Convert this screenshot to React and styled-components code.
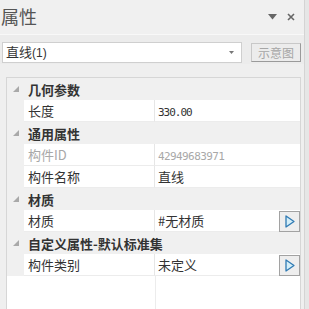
import React from "react";
import styled, { createGlobalStyle } from "styled-components";

const Global = createGlobalStyle`
  html, body { margin: 0; padding: 0; }
  body {
    width: 309px; height: 309px; overflow: hidden;
    background: #f0f0f0;
    font-family: "Noto Sans CJK SC", "Noto Sans", sans-serif;
  }
`;

const Frame = styled.div`
  display: flex;
  width: 309px;
  height: 309px;
`;

const Main = styled.div`
  width: 305px;
  display: flex;
  flex-direction: column;
  background: #efefef;
`;

const EdgeBar = styled.div`
  width: 4px;
  border-left: 1px solid #d4d4d4;
  background: #e6e6e6;
`;

const Header = styled.div`
  height: 34px;
  display: flex;
  align-items: center;
  justify-content: space-between;
  padding-left: 1px;
  padding-right: 9px;
  border-bottom: 1px solid #f8f8f8;
  background: #f0f0f0;
`;

const Title = styled.div`
  font-size: 18px;
  color: #555;
  line-height: 20px;
  margin-top: -2px;
`;

const DockIcons = styled.div`
  display: flex;
  align-items: center;
  gap: 10px;
`;

const Toolbar = styled.div`
  display: flex;
  align-items: center;
  padding: 6px 0 0 2px;
  gap: 9px;
  background: #ececec;
  height: 23px;
`;

const Combo = styled.div`
  height: 19px;
  width: 228px;
  background: #fff;
  border: 1px solid #cfcfcf;
  display: flex;
  align-items: center;
  justify-content: space-between;
  padding: 0 7px 0 3px;
  box-sizing: content-box;
  font-size: 13px;
  color: #333;
`;

const ComboText = styled.span`
  line-height: 19px;
  color: #333;
`;

const Paren = styled.span`
  font-family: "Liberation Sans", sans-serif;
  font-size: 12px;
`;

const HintButton = styled.div`
  width: 48px;
  height: 17px;
  border: 1px solid #9a9a9a;
  border-top-color: #c8c8c8;
  border-left-color: #c8c8c8;
  display: flex;
  align-items: center;
  justify-content: center;
  font-size: 12px;
  color: #a6a6a6;
  margin-top: -1px;
`;

const Grid = styled.div`
  flex: 1;
  margin: 13px 3px 0 6px;
  border: 1px solid #d6d6d6;
  border-bottom: none;
  background: #fff;
  display: flex;
  flex-direction: column;
`;

const Row = styled.div`
  height: 22px;
  display: flex;
  align-items: stretch;
  background: ${(p) => (p.$group ? "#f0f0f0" : "#fff")};
`;

const Indent = styled.div`
  width: 17px;
  flex: none;
  background: #f0f0f0;
  display: flex;
  align-items: center;
  justify-content: center;
`;

const GroupLabel = styled.div`
  display: flex;
  align-items: center;
  padding-left: 4px;
  font-size: 13px;
  font-weight: 700;
  color: #333;
  white-space: nowrap;
`;

const NameCell = styled.div`
  width: 131px;
  flex: none;
  border-right: 1px solid #e6e6e6;
  border-bottom: 1px solid #ececec;
  display: flex;
  align-items: center;
  padding-left: 4px;
  box-sizing: border-box;
  font-size: 13px;
  color: ${(p) => (p.$disabled ? "#a8a8a8" : "#333")};
`;

const ValueCell = styled.div`
  flex: 1;
  border-bottom: 1px solid #ececec;
  display: flex;
  align-items: center;
  justify-content: space-between;
  padding-left: 3px;
  font-size: 13px;
  color: ${(p) => (p.$disabled ? "#a8a8a8" : "#333")};
  white-space: nowrap;
`;

const Mono = styled.span`
  font-family: "DejaVu Sans Mono", "Liberation Mono", monospace;
  font-size: ${(p) => p.$size}px;
  letter-spacing: ${(p) => p.$track}px;
`;

const ArrowButton = styled.div`
  width: 19px;
  height: 19px;
  border: 1px solid #a2a2a2;
  background: #eeeeee;
  display: flex;
  align-items: center;
  justify-content: center;
  margin-top: 1px;
  flex: none;
`;

const Filler = styled.div`
  flex: 1;
  display: flex;
`;

const FillerName = styled.div`
  width: 148px;
  border-right: 1px solid #ececec;
`;

const Expander = () => (
  <svg width="6" height="6" viewBox="0 0 6 6">
    <polygon points="6,0 6,6 0,6" fill="#a9a9a9" />
  </svg>
);

const PlayIcon = () => (
  <svg width="10" height="13" viewBox="0 0 10 13">
    <polygon points="1,1 9,6.5 1,12" fill="#d4eef8" stroke="#2f7ab3" strokeWidth="1.3" strokeLinejoin="round" />
  </svg>
);

const groups = [
  { title: "几何参数", rows: [{ name: "长度", value: <Mono $size={11} $track={-1}>330.00</Mono> }] },
  {
    title: "通用属性",
    rows: [
      { name: "构件ID", value: <Mono $size={11} $track={-0.6}>42949683971</Mono>, disabled: true },
      { name: "构件名称", value: "直线" },
    ],
  },
  { title: "材质", rows: [{ name: "材质", value: "#无材质", button: true }] },
  { title: "自定义属性-默认标准集", rows: [{ name: "构件类别", value: "未定义", button: true }] },
];

export default function App() {
  return (
    <>
      <Global />
      <Frame>
        <Main>
          <Header>
            <Title>属性</Title>
            <DockIcons>
              <svg width="9" height="6" viewBox="0 0 9 6">
                <polygon points="0,0 9,0 4.5,5.5" fill="#666" />
              </svg>
              <svg width="8" height="8" viewBox="0 0 8 8">
                <path d="M1 1 L7 7 M7 1 L1 7" stroke="#666" strokeWidth="1.6" />
              </svg>
            </DockIcons>
          </Header>
          <Toolbar>
            <Combo>
              <ComboText>
                直线<Paren>(1)</Paren>
              </ComboText>
              <svg width="5" height="3" viewBox="0 0 5 3">
                <polygon points="0,0 5,0 2.5,3" fill="#777" />
              </svg>
            </Combo>
            <HintButton>示意图</HintButton>
          </Toolbar>
          <Grid>
            {groups.map((g) => (
              <React.Fragment key={g.title}>
                <Row $group>
                  <Indent>
                    <Expander />
                  </Indent>
                  <GroupLabel>{g.title}</GroupLabel>
                </Row>
                {g.rows.map((r) => (
                  <Row key={r.name}>
                    <Indent />
                    <NameCell $disabled={r.disabled}>{r.name}</NameCell>
                    <ValueCell $disabled={r.disabled}>
                      <span>{r.value}</span>
                      {r.button && (
                        <ArrowButton>
                          <PlayIcon />
                        </ArrowButton>
                      )}
                    </ValueCell>
                  </Row>
                ))}
              </React.Fragment>
            ))}
            <Filler>
              <FillerName />
            </Filler>
          </Grid>
        </Main>
        <EdgeBar />
      </Frame>
    </>
  );
}
